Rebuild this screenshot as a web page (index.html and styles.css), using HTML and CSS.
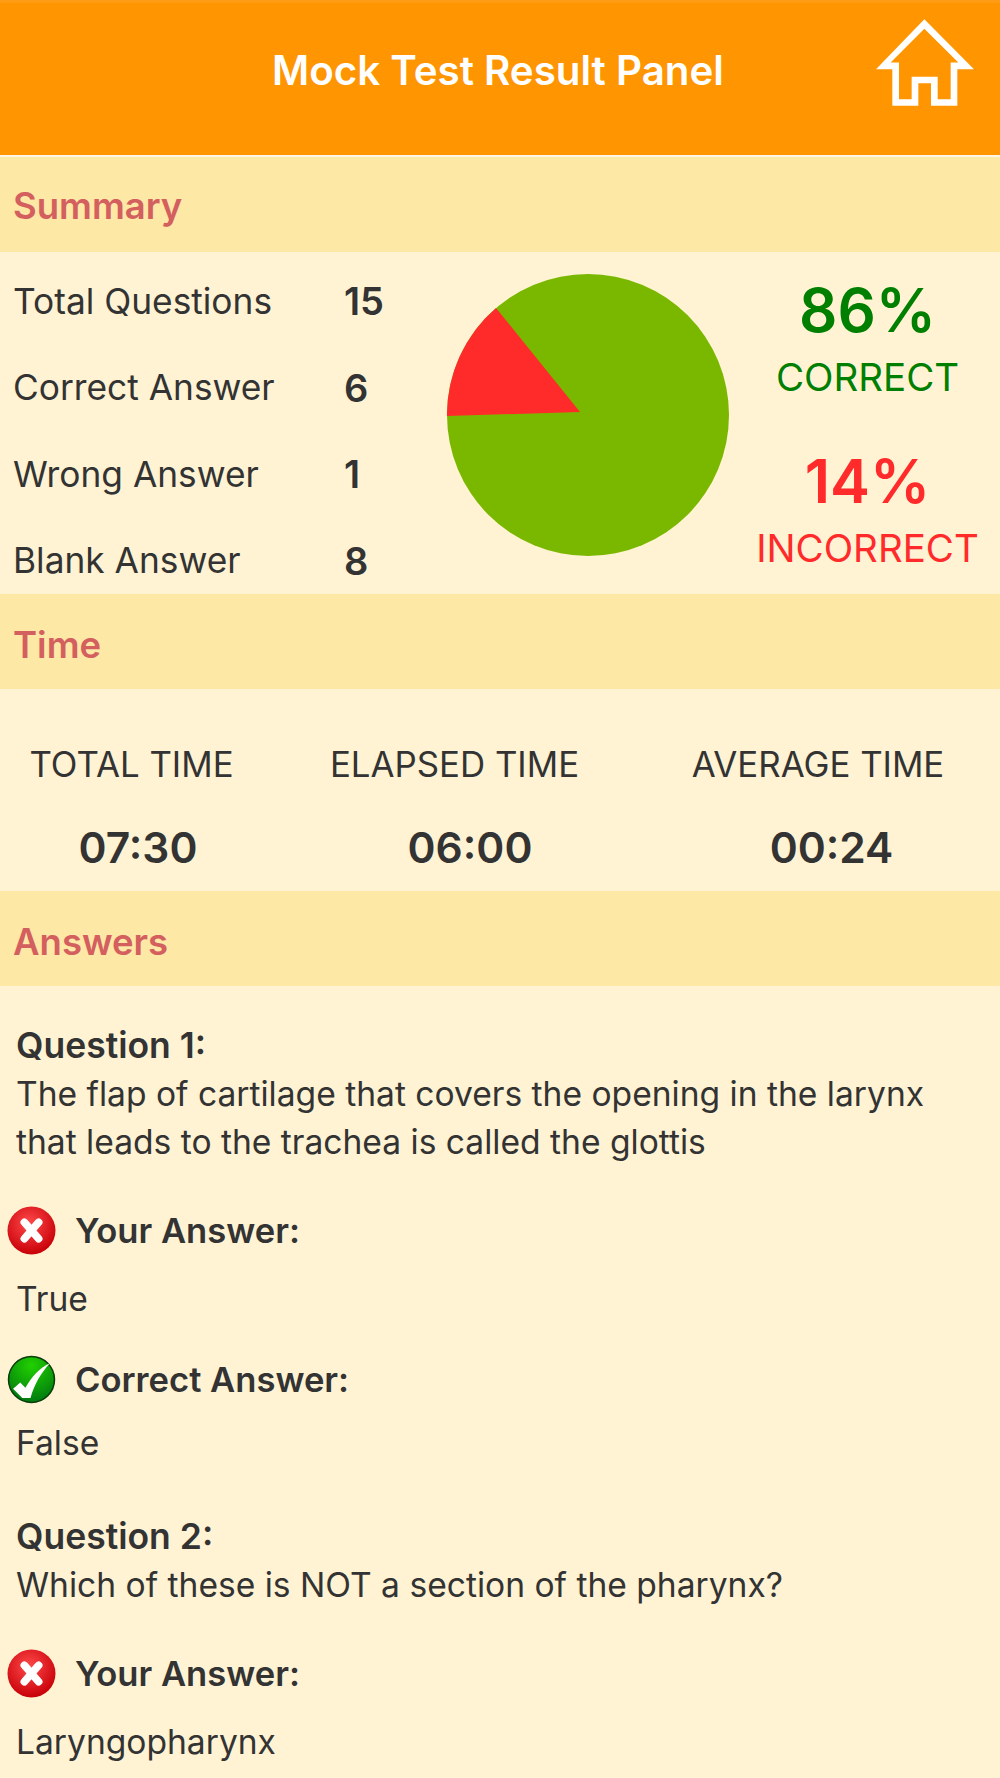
FILE: index.html
```html
<!DOCTYPE html>
<html lang="en">
<head>
  <meta charset="UTF-8">
  <meta name="viewport" content="width=device-width, initial-scale=1.0">
  <title>Mock Test Result Panel</title>
  <link rel="stylesheet" href="styles.css">
</head>
<body>
  <header class="top-bar">
    <h1>Mock Test Result Panel</h1>
    <svg class="home-icon" viewBox="78 58 294 260">
      <path fill="#fff" fill-rule="evenodd" d="M223 58L372 208H322V318H243V250H205V318H127V208H78ZM223 87L122 188H147V298H185V231H263V298H302V188H325Z"/>
    </svg>
  </header>

  <h2 class="band">Summary</h2>
  <section class="summary">
    <div class="stats">
      <span>Total Questions</span><b>15</b>
      <span>Correct Answer</span><b>6</b>
      <span>Wrong Answer</span><b>1</b>
      <span>Blank Answer</span><b>8</b>
    </div>
    <svg class="pie" width="282" height="282" viewBox="447 274 282 282">
      <circle cx="588" cy="415" r="141" fill="#7ab800"/>
      <path fill="#ff2a2a" d="M580 412L496 308A141 141 0 0 0 447 416Z"/>
    </svg>
    <div class="percents">
      <div class="percent good"><strong>86%</strong><span>CORRECT</span></div>
      <div class="percent bad"><strong>14%</strong><span>INCORRECT</span></div>
    </div>
  </section>

  <h2 class="band low">Time</h2>
  <section class="times">
    <div class="time-col"><span>TOTAL TIME</span><b class="shift-a">07:30</b></div>
    <div class="time-col"><span>ELAPSED TIME</span><b class="shift-b">06:00</b></div>
    <div class="time-col"><span>AVERAGE TIME</span><b class="shift-c">00:24</b></div>
  </section>

  <h2 class="band low">Answers</h2>
  <section class="answers">
    <article class="question">
      <p><b>Question 1:</b><br>The flap of cartilage that covers the opening in the larynx that leads to the trachea is called the glottis</p>
      <div class="answer-head first">
        <svg class="mark" viewBox="0 0 48 48">
          <defs>
            <radialGradient id="red-ball" cx="45%" cy="35%" r="65%">
              <stop offset="0" stop-color="#ff4a4a"/>
              <stop offset="1" stop-color="#c80008"/>
            </radialGradient>
            <radialGradient id="green-ball" cx="50%" cy="20%" r="80%">
              <stop offset="0" stop-color="#22d000"/>
              <stop offset="1" stop-color="#007a10"/>
            </radialGradient>
          </defs>
          <circle cx="24" cy="24" r="23.5" fill="url(#red-ball)"/>
          <path d="M17 16L31 32M31 16L17 32" stroke="#fff" stroke-width="7.5" stroke-linecap="round"/>
        </svg>
        <b>Your Answer:</b>
      </div>
      <p class="answer-text">True</p>
      <div class="answer-head">
        <svg class="mark" viewBox="0 0 48 48">
          <circle cx="24" cy="24" r="22.5" fill="url(#green-ball)" stroke="#0a3d0a" stroke-width="1.5"/>
          <path fill="#fff" d="M6 33L13 27L18 32C24 22 31 13 42 8C33 18 27 28 23 42H15Z"/>
        </svg>
        <b>Correct Answer:</b>
      </div>
      <p class="answer-text tight">False</p>
    </article>
    <article class="question second">
      <p><b>Question 2:</b><br>Which of these is NOT a section of the pharynx?</p>
      <div class="answer-head first">
        <svg class="mark" viewBox="0 0 48 48">
          <circle cx="24" cy="24" r="23.5" fill="url(#red-ball)"/>
          <path d="M17 16L31 32M31 16L17 32" stroke="#fff" stroke-width="7.5" stroke-linecap="round"/>
        </svg>
        <b>Your Answer:</b>
      </div>
      <p class="answer-text">Laryngopharynx</p>
    </article>
  </section>
</body>
</html>
```

FILE: styles.css
```css
html, body {
  height: 1778px;
  overflow: hidden;
}

body {
  font-family: Inter, "Liberation Sans", sans-serif;
  background: #fff3d4;
  color: #333;
  margin: 0;
}

.top-bar {
  height: 136px;
  background: #ff9500;
  border-top: 3px solid #ff9c14;
  border-bottom: 2px solid #fff7e6;
  display: flex;
  justify-content: space-between;
  padding: 16px 26px 0 272px;
}

.top-bar h1 {
  margin: 29px 0 0;
  color: #fff;
  font-size: 40.3px;
  line-height: 46px;
  font-weight: 600;
}

.home-icon {
  width: 98px;
  height: 87px;
}

.band {
  margin: 0;
  height: 95px;
  line-height: 98px;
  padding-left: 13px;
  background: #fee8a6;
  color: #d35f5f;
  font-size: 36.5px;
  font-weight: 600;
}

.band.low {
  line-height: 102px;
}

.summary {
  height: 342px;
  display: flex;
}

.stats {
  width: 433px;
  padding: 6px 0 0 13px;
  display: grid;
  grid-template-columns: 331px 1fr;
  grid-auto-rows: 86.5px;
  align-items: center;
  font-size: 35.3px;
  box-sizing: border-box;
}

.stats b {
  font-size: 38px;
  font-weight: 600;
}

.pie {
  margin: 22px 0 0 14px;
}

.percents {
  flex: 1;
  padding: 21px 0 0 6px;
}

.percent {
  display: flex;
  flex-direction: column;
  align-items: center;
  height: 171px;
}

.percent strong {
  font-size: 60px;
  line-height: 74px;
  font-weight: 600;
}

.percent span {
  font-size: 38.5px;
  line-height: 60px;
}

.good {
  color: #007f00;
}

.bad {
  color: #ff2a2a;
}

.times {
  height: 202px;
  display: grid;
  grid-template-columns: 263px 383px 344px;
  text-align: center;
}

.time-col {
  display: flex;
  flex-direction: column;
  padding-top: 53px;
  font-size: 34.8px;
}

.time-col span {
  line-height: 44px;
}

.time-col b {
  margin-top: 37px;
  font-size: 42.5px;
  line-height: 50px;
  font-weight: 600;
}

.shift-a { padding-left: 13px; }
.shift-b { padding-left: 31px; }
.shift-c { padding-left: 27px; }

.answers {
  padding: 36px 0 0 16px;
}

.question p {
  margin: 0;
  font-size: 33.6px;
  line-height: 48px;
  max-width: 950px;
}

.question p b {
  font-size: 35.5px;
}

.question b {
  font-weight: 600;
}

.second {
  margin-top: 46px;
}

.answer-head {
  display: flex;
  align-items: center;
  gap: 19px;
  margin: 32px 0 0 -9px;
  height: 48px;
  font-size: 34.6px;
}

.answer-head.first {
  margin-top: 40px;
}

.mark {
  width: 49px;
  height: 49px;
  flex: none;
}

.question .answer-text {
  margin-top: 21px;
}

.question .answer-text.tight {
  margin-top: 16px;
}
```
